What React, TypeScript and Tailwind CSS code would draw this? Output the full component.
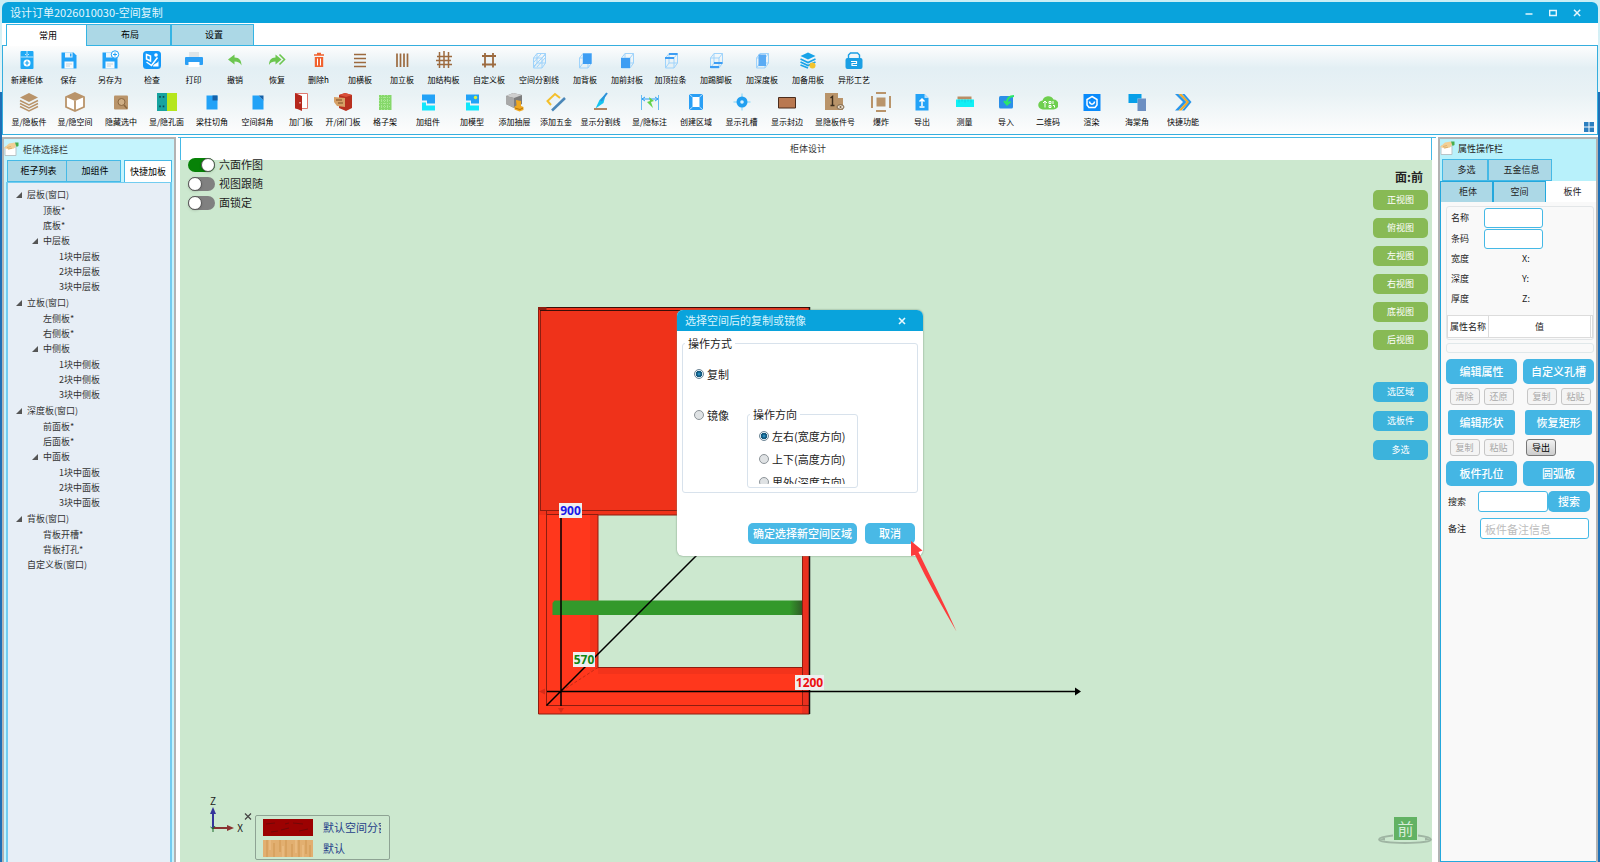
import type { ReactNode } from "react";

type Tool = { label: string; width: string; icon: ReactNode };

const BLUE = "#22a2f7";
const TAN = "#b9946a";
const BROWN = "#9c6a3f";
const WIRE = "#9fd3fb";

function WireBox({ children }: { children?: ReactNode }) {
  return (
    <>
      <path d="M4.500 8h8.500v10h-8.500z M4.500 8l3.500-4.500h8.500v9.500l-3.500 5 M13 8l3.500-4.500 M8 3.500v9.500h8.500 M8 13l-3.500 5" fill="none" stroke={WIRE} strokeWidth="1" />
      {children}
    </>
  );
}

function Floppy() {
  return (
    <>
      <path d="M2.500 2.500h12l3 3v13h-15z" fill={BLUE} />
      <path d="M6 2.500h7.500v5H6z" fill="#eaf5fb" />
      <path d="M11 3.500h1.500v3H11z" fill={BLUE} />
      <path d="M5.500 11.500h9v7h-9z" fill="#f8fbfd" />
      <path d="M7 14h6M7 16h4" stroke="#c4d3dc" />
    </>
  );
}

const firstRow: Tool[] = [
  {
    label: "新建柜体", width: "w-[42px]",
    icon: (
      <>
        <rect x="3.500" y="1" width="13" height="18" rx="1" fill="#1fa9f5" />
        <path d="M3.500 7h13M10 1v6M8 4.500h1M11 4.500h1" stroke="#bfe6fc" />
        <circle cx="10" cy="13" r="3.500" fill="#fff" />
        <path d="M10 10.800v4.400M7.800 13h4.400" stroke="#1fa9f5" strokeWidth="1.200" />
      </>
    ),
  },
  { label: "保存", width: "w-[41px]", icon: <Floppy /> },
  {
    label: "另存为", width: "w-[42px]",
    icon: (
      <>
        <Floppy />
        <circle cx="15" cy="4.500" r="3.700" fill="#fff" stroke={BLUE} />
        <path d="M15 2.500v4M13 4.500h4" stroke={BLUE} />
      </>
    ),
  },
  {
    label: "检查", width: "w-[42px]",
    icon: (
      <>
        <rect x="1" y="1" width="18" height="18" rx="3.500" fill="#1499fa" />
        <path d="M4.500 4.500l4 1.500v5l-4-2zM4.500 12l5 3.500l6-8" fill="none" stroke="#fff" strokeWidth="1.500" />
        <circle cx="14" cy="5" r="1.800" fill="#fff" />
        <path d="M11 16.500c0-3 5.500-3 5.500-6v6z" fill="#fff" />
      </>
    ),
  },
  {
    label: "打印", width: "w-[41px]",
    icon: (
      <>
        <path d="M5 2h10v6H5z" fill="#dfe5e8" />
        <rect x="1" y="7" width="18" height="8" rx="1" fill="#2b9ff5" />
        <path d="M4.500 12h11v5h-11z" fill="#fff" />
      </>
    ),
  },
  { label: "撤销", width: "w-[42px]", icon: <path d="M3 9.500l6.500-5v3c5 0 7 3 7 8c-1.500-3-3.500-4-7-4v3z" fill="#6cc650" /> },
  {
    label: "恢复", width: "w-[42px]",
    icon: (
      <>
        <path d="M14.500 9.500L8.500 4.500v3C4 7.500 2 10.500 2 15c1.500-3 3.500-3.500 6.500-3.500v3z" fill="#6cc650" />
        <path d="M12.500 4.500l5 5l-5 5" fill="none" stroke="#6cc650" strokeWidth="1.600" />
      </>
    ),
  },
  {
    label: "删除h", width: "w-[41px]",
    icon: (
      <>
        <path d="M5 5h10M8 3.500h4" stroke="#f1622f" strokeWidth="1.600" />
        <path d="M5.800 7h8.400v10H5.800z" fill="#f1622f" />
        <path d="M8.500 8.500v7M11.500 8.500v7" stroke="#fff" />
      </>
    ),
  },
  { label: "加横板", width: "w-[42px]", icon: <path d="M4 4.500h12M4 8.500h12M4 12.500h12M4 16.500h12" stroke={BROWN} strokeWidth="1.700" /> },
  { label: "加立板", width: "w-[42px]", icon: <path d="M5 3.500v13.500M8.500 3.500v13.500M12 3.500v13.500M15.500 3.500v13.500" stroke={BROWN} strokeWidth="1.700" /> },
  { label: "加结构板", width: "w-[41px]", icon: <path d="M3 6.500h15M2 10.500h15M3 14.500h15M5.500 2v16M10 1v17M14.500 2v16" stroke={BROWN} strokeWidth="1.500" /> },
  { label: "自定义板", width: "w-[50px]", icon: <path d="M3 6h14M3 14.500h14M6 3v14.500M14 3v14.500" stroke={BROWN} strokeWidth="1.800" /> },
  {
    label: "空间分割线", width: "w-[50px]",
    icon: <WireBox><path d="M5 12l7-8M5 16l11-11M8 17l8-9" stroke={WIRE} /></WireBox>,
  },
  { label: "加背板", width: "w-[42px]", icon: <WireBox><path d="M8 3.500h8.500v10.500H8z" fill="#3d9df3" /></WireBox> },
  { label: "加前封板", width: "w-[42px]", icon: <WireBox><path d="M4 8h9v10H4z" fill="#3d9df3" /></WireBox> },
  { label: "加顶拉条", width: "w-[45px]", icon: <WireBox><path d="M4 8h9M8 4h8.500" stroke="#3d9df3" strokeWidth="1.800" /></WireBox> },
  { label: "加踢脚板", width: "w-[46px]", icon: <WireBox><path d="M4 17h9M8 13h8.500" stroke="#3d9df3" strokeWidth="1.800" /></WireBox> },
  { label: "加深度板", width: "w-[46px]", icon: <WireBox><path d="M6.500 4.500h7.500V16H6.500z" fill="#5aabf4" /></WireBox> },
  {
    label: "加备用板", width: "w-[46px]",
    icon: (
      <>
        <path d="M10 2.500l7.500 3.500L10 9.500L2.500 6z" fill="#18a3e8" />
        <path d="M2.500 9l7.500 3.500L17.500 9M2.500 12l7.500 3.500l7.500-3.500M2.500 15l7.500 3" fill="none" stroke="#18a3e8" strokeWidth="1.600" />
        <circle cx="14.500" cy="15.500" r="3" fill="#f2c32c" />
      </>
    ),
  },
  {
    label: "异形工艺", width: "w-[46px]",
    icon: (
      <>
        <path d="M4.500 8.500v-3.500l2-2h7l2 2v3.500" fill="none" stroke="#1b9fe4" strokeWidth="1.400" />
        <rect x="1.500" y="8" width="17" height="11" rx="2" fill="#1b9fe4" />
        <path d="M7 11.500h5.500v2H8v2h5" fill="none" stroke="#fff" strokeWidth="1.200" />
      </>
    ),
  },
];

const secondRow: Tool[] = [
  {
    label: "显/隐板件", width: "w-[46px]",
    icon: (
      <>
        <path d="M10 1l9 4.500L10 10L1 5.500z" fill={TAN} />
        <path d="M1 8.500l9 4.500l9-4.500M1 11.500l9 4.500l9-4.500M1 14.500l9 4.500l9-4.500" fill="none" stroke={TAN} strokeWidth="1.500" />
      </>
    ),
  },
  {
    label: "显/隐空间", width: "w-[46px]",
    icon: (
      <>
        <path d="M10 1l9 4v10l-9 4l-9-4V5z" fill="#fff" stroke={TAN} strokeWidth="1.800" />
        <path d="M1 5l9-4l9 4l-9 4z" fill={TAN} />
        <path d="M10 9v10" stroke={TAN} strokeWidth="1.800" />
      </>
    ),
  },
  {
    label: "隐藏选中", width: "w-[46px]",
    icon: (
      <>
        <rect x="3" y="3.500" width="14" height="14" rx="1" fill={TAN} />
        <circle cx="10.500" cy="10" r="3.500" fill="#cfae85" stroke="#8a6740" />
        <path d="M13 13l3 3.500" stroke="#8a6740" strokeWidth="1.500" />
      </>
    ),
  },
  {
    label: "显/隐孔面", width: "w-[45px]",
    icon: (
      <>
        <path d="M0 1h10v18H0z" fill="#17a3a0" />
        <path d="M10 1h10v18H10z" fill="#b5e61d" />
        <path d="M3 4v1.800M3 13.500v1.800M6.500 4v1.800M6.500 13.500v1.800" stroke="#0b4a55" strokeWidth="1.600" />
      </>
    ),
  },
  {
    label: "梁柱切角", width: "w-[46px]",
    icon: (
      <>
        <path d="M4.500 3.500h11v14h-11z" fill={BLUE} />
        <path d="M10.500 3.500h5v5h-5z" fill="#1461a8" />
      </>
    ),
  },
  {
    label: "空间斜角", width: "w-[45px]",
    icon: (
      <>
        <path d="M4.500 3.500h6l5 5v9h-11z" fill={BLUE} />
        <path d="M10.500 3.500h5v5z" fill="#1461a8" />
      </>
    ),
  },
  {
    label: "加门板", width: "w-[42px]",
    icon: (
      <>
        <path d="M4.500 1.500h12v15h-12z" fill="#fff" stroke="#e07a70" />
        <path d="M4 1l7 3v15l-7-3z" fill="#b5271c" />
        <path d="M9 10v1.500" stroke="#fff" />
      </>
    ),
  },
  {
    label: "开/闭门板", width: "w-[42px]",
    icon: (
      <>
        <path d="M6 3l6-2l7 2v13l-6 3l-7-3z" fill="#b8301f" />
        <path d="M6 3l6-2l7 2l-6 2z" fill="#d9503a" />
        <path d="M1 5l11 1v9l-8-1l-3-4z" fill="#d6a066" />
        <path d="M3 8h6M5 11h5" stroke="#7c4a22" />
      </>
    ),
  },
  {
    label: "格子架", width: "w-[42px]",
    icon: (
      <>
        <path d="M4 3h12.500v15H4z" fill="#86d86b" />
        <path d="M4 5.500h12M4 8.500h12M4 11.500h12M4 14.500h12M6.500 3v15M9.500 3v15M12.500 3v15" stroke="#a9e894" strokeDasharray="1 1" />
      </>
    ),
  },
  {
    label: "加组件", width: "w-[44px]",
    icon: (
      <>
        <path d="M4 2.500h13v9H9v-3H4z" fill={BLUE} />
        <path d="M4 10.500h4v3h9v5H4z" fill="#12e6fb" />
      </>
    ),
  },
  {
    label: "加模型", width: "w-[44px]",
    icon: (
      <>
        <path d="M4 2.500h13v9H9v-3H4z" fill={BLUE} />
        <path d="M4 10.500h4v3h9v5H4z" fill="#12e6fb" />
        <circle cx="13.500" cy="5.500" r="1.700" fill="#e3f23a" />
      </>
    ),
  },
  {
    label: "添加抽屉", width: "w-[41px]",
    icon: (
      <>
        <path d="M1 4l7-3l9 2v9l-8 4l-8-4z" fill="#7d7d7d" />
        <path d="M1 4l7-3l9 2l-8 3z" fill="#cfcfcf" />
        <path d="M1 4l8 2v10l-8-4z" fill="#a9a9a9" />
        <path d="M11 8l5 1v5l2.500 1v3l-4 1.500l-5-2v-3l2-1z" fill="#efa81f" />
        <path d="M10 16l5 1.500l3-1.500" fill="none" stroke="#b87308" />
      </>
    ),
  },
  {
    label: "添加五金", width: "w-[42px]",
    icon: (
      <>
        <path d="M5 13l-3.500-4l7.500-7l5 4" fill="none" stroke="#f4bf2b" strokeWidth="2" />
        <path d="M6 18.500L19 6" stroke="#4b87b8" strokeWidth="2.600" />
      </>
    ),
  },
  {
    label: "显示分割线", width: "w-[47px]",
    icon: (
      <>
        <path d="M15 1.500L8.500 8l-4 8.500l8-5.500z" fill="#14c4f0" />
        <path d="M16 1l-6 8" stroke="#2f8fd8" strokeWidth="2" />
        <path d="M3 17h13" stroke="#b08462" strokeWidth="2" />
      </>
    ),
  },
  {
    label: "显/隐标注", width: "w-[51px]",
    icon: (
      <>
        <path d="M1.500 3v15M18.500 3v15" stroke="#69bdf2" />
        <path d="M2 7h16M5 5L2 7l3 2M15 5l3 2l-3 2" fill="none" stroke="#2b9ff5" />
        <path d="M9 5l5 4l-3 1l2 6l-6-6l3-1z" fill="#63d34a" />
      </>
    ),
  },
  {
    label: "创建区域", width: "w-[42px]",
    icon: (
      <>
        <path d="M3 2h14v16H3z" fill="#299ff5" />
        <path d="M6.500 5h7v10h-7z" fill="#fff" />
        <path d="M3 2l3.500 3M17 2l-3.500 3M3 18l3.500-3M17 18l-3.500-3" stroke="#bfe1fb" />
      </>
    ),
  },
  {
    label: "显示孔槽", width: "w-[49px]",
    icon: (
      <>
        <path d="M10 1.500v17M1.500 10h17" stroke="#7ad3fa" />
        <circle cx="10" cy="10" r="5.500" fill="#219ff0" />
        <circle cx="10" cy="10" r="1.800" fill="#d8effd" />
      </>
    ),
  },
  { label: "显示封边", width: "w-[42px]", icon: <path d="M1.500 5.500h17v10.500h-17z" fill="#b97850" stroke="#4a2c1c" /> },
  {
    label: "显隐板件号", width: "w-[54px]",
    icon: (
      <>
        <path d="M0 1h13v5h5v12H0z" fill={TAN} />
        <path d="M5.500 6l2-1.500v9M5.500 13.500h4" fill="none" stroke="#3b2c1c" strokeWidth="1.400" />
        <ellipse cx="15.500" cy="15" rx="3.500" ry="2.300" fill="#e9ddcd" stroke="#7c6448" />
        <circle cx="15.500" cy="15" r="1" fill="#7c6448" />
      </>
    ),
  },
  {
    label: "爆炸", width: "w-[38px]",
    icon: (
      <>
        <path d="M5.500 5.500h9v9h-9z" fill={TAN} />
        <path d="M5 1h10M5 19h10M1 4v12M19 4v12" stroke={TAN} strokeWidth="2" />
      </>
    ),
  },
  {
    label: "导出", width: "w-[44px]",
    icon: (
      <>
        <path d="M3.500 2h9l4 4v12.500h-13z" fill={BLUE} />
        <path d="M12.500 2l4 4h-4z" fill="#b6dffc" />
        <path d="M10 14V7.500M7.500 9.500L10 7l2.500 2.500M7.500 15h5" fill="none" stroke="#fff" strokeWidth="1.500" />
      </>
    ),
  },
  {
    label: "测量", width: "w-[41px]",
    icon: (
      <>
        <path d="M2.500 4.500h14v3h-14z" fill="#b98e66" />
        <path d="M1 7.500h18v7.500H1z" fill="#0ff0f5" />
        <path d="M4 7.500v3M7 7.500v2M10 7.500v3M13 7.500v2M16 7.500v3" stroke="#12d0de" />
      </>
    ),
  },
  {
    label: "导入", width: "w-[42px]",
    icon: (
      <>
        <rect x="3" y="4" width="14" height="12.500" rx="1.500" fill="#2b8fe8" />
        <path d="M18 4c-5 0-7 2-7 7M8 9l3 3.500l3.500-3" fill="none" stroke="#2ce66a" strokeWidth="2" />
      </>
    ),
  },
  {
    label: "二维码", width: "w-[42px]",
    icon: (
      <>
        <path d="M5 17.500a4.500 4.500 0 0 1-.5-9a6 6 0 0 1 11-1a5 5 0 0 1 0 10z" fill="#6fcf4f" />
        <path d="M7 15.500V9M5 11l2-2l2 2M11 9.500h2v2h-2zM15 9v3M11 13.500h2v2h-2zM15 13.500h1.500v2" fill="none" stroke="#fff" />
      </>
    ),
  },
  {
    label: "渲染", width: "w-[45px]",
    icon: (
      <>
        <path d="M1.500 2h17v17h-17z" fill="#0a8bfb" />
        <path d="M10 4.500l5 3v5.500l-2 2.500H7L5 13V7.500z" fill="none" stroke="#fff" strokeWidth="1.500" />
        <path d="M7.500 9.500c.5 3.500 4.500 3.500 5 0" fill="none" stroke="#fff" strokeWidth="1.500" />
      </>
    ),
  },
  {
    label: "海棠角", width: "w-[46px]",
    icon: (
      <>
        <path d="M10.500 6.500h8.500v12.500h-8.500z" fill="#6c8fc2" />
        <path d="M1.500 2h13v4.500h-4V11h-9z" fill="#079fe8" />
      </>
    ),
  },
  {
    label: "快捷功能", width: "w-[46px]",
    icon: (
      <>
        <path d="M2 2l8 8l-8 8.500h3.500l8-8.500l-8-8z" fill="#2a96ea" />
        <path d="M5.500 2l8 8l-8 8.500h3l8-8.500l-8-8z" fill="#f0a829" />
        <path d="M9 2l7 8l-7 8.500h2.500l7-8.500l-7-8z" fill="#2a96ea" />
      </>
    ),
  },
];

function ToolRow({ tools }: { tools: Tool[] }) {
  return (
    <div className="flex h-[42px]">
      {tools.map((tool) => (
        <button key={tool.label} type="button" className={`flex shrink-0 flex-col items-center gap-1 ${tool.width}`}>
          <svg viewBox="0 0 20 20" className="size-5 shrink-0" aria-hidden="true">{tool.icon}</svg>
          <span className="text-[8px] leading-3 whitespace-nowrap">{tool.label}</span>
        </button>
      ))}
    </div>
  );
}

type Node = { label: string; children?: Node[] };

const group = (name: string, sides: string[], middle: string): Node => ({
  label: `${name}(窗口)`,
  children: [
    ...sides.map((label) => ({ label })),
    { label: middle, children: ["1块", "2块", "3块"].map((count) => ({ label: count + middle })) },
  ],
});

const tree: Node[] = [
  group("层板", ["顶板*", "底板*"], "中层板"),
  group("立板", ["左侧板*", "右侧板*"], "中侧板"),
  group("深度板", ["前面板*", "后面板*"], "中面板"),
  { label: "背板(窗口)", children: [{ label: "背板开槽*" }, { label: "背板打孔*" }] },
  { label: "自定义板(窗口)" },
];

function TreeItems({ nodes }: { nodes: Node[] }) {
  return nodes.map((node) => (
    <li key={node.label}>
      <div className="flex h-[15px] items-center">
        <span className="flex w-4 justify-center">
          {node.children && (
            <svg viewBox="0 0 6 6" className="size-[6px]" aria-hidden="true">
              <path d="M6 0v6H0z" fill="#555" />
            </svg>
          )}
        </span>
        <span className="leading-[15px] whitespace-nowrap">{node.label}</span>
      </div>
      {node.children && (
        <ul className={node.label.includes("窗口") ? "pt-px pl-4" : "py-px pl-4"}>
          <TreeItems nodes={node.children} />
        </ul>
      )}
    </li>
  ));
}

function HandIcon() {
  return (
    <svg viewBox="0 0 16 16" className="size-4" aria-hidden="true">
      <path d="M1 5h11v8.500H1z" fill="#fff" stroke="#b9c4c8" />
      <path d="M0 6l5-4.500l6-1l2 2l-3 4l-5 1z" fill="#f2cf95" />
      <path d="M3 5.500l4-1M4 7l4-.8" stroke="#d9aa66" strokeWidth=".8" />
      <path d="M11 .5h3.500v3.500l-2 1z" fill="#46ae4d" />
    </svg>
  );
}

const sideTab = "h-[22px] border border-[#45b9e6] bg-[#acd8e6]";

function LeftPanel() {
  return (
    <aside className="flex w-[174px] shrink-0 flex-col border-2 border-b-0 border-[#b3b3b3] bg-[#c5f4fd] text-[9px]">
      <h2 className="flex h-[21px] items-center gap-[3px] text-[#333]">
        <HandIcon />柜体选择栏
      </h2>
      <div className="relative z-10 ml-[3px] flex items-end">
        <button type="button" className={`w-[60px] pl-[3px] ${sideTab}`}>柜子列表</button>
        <button type="button" className={`w-[54px] border-l-0 pl-[3px] ${sideTab}`}>加组件</button>
        <button type="button" className="ml-[3px] h-[22px] w-[48px] border border-b-0 border-[#45b9e6] bg-white">快捷加板</button>
      </div>
      <ul className="mx-[2px] flex-1 border-x-2 border-t border-[#72ccf0] bg-[#e7eef6] pt-[4px] pl-[3px] text-[#333]">
        <TreeItems nodes={tree} />
      </ul>
    </aside>
  );
}

function Toggle({ label, on }: { label: string; on?: boolean }) {
  return (
    <label className="flex h-[19px] items-center gap-1 text-[11px] leading-[19px] text-[#222]">
      <input type="checkbox" role="switch" defaultChecked={on} className="peer sr-only" />
      <span className="flex h-[14px] w-[27px] items-center rounded-full bg-[#808080] peer-checked:justify-end peer-checked:bg-[#078207]">
        <span className="size-[14px] rounded-full border border-[#555] bg-white shadow-sm" />
      </span>
      {label}
    </label>
  );
}

const measure = "fill-current font-['Open_Sans','Noto_Sans',sans-serif] text-[12px] font-bold";

function Cabinet() {
  return (
    <svg width="560" height="420" className="absolute top-[140px] left-[350px]" viewBox="530 300 560 420" aria-hidden="true">
      <defs>
        <linearGradient id="shelf" x1="0" x2="1">
          <stop offset="0.950" stopColor="#33992b" />
          <stop offset="1" stopColor="#2f5d27" />
        </linearGradient>
      </defs>
      <path d="M538 307h272v407h-272z" fill="#ff371c" />
      <path d="M590 515h8v152.500l-8 4z" fill="#f5331b" />
      <path d="M538 307h272v208h-272z" fill="#ef321a" />
      <path d="M598 515h204v152.500h-204z" fill="#cce8cf" />
      <path d="M802 515h8v199h-8z" fill="#e9301f" />
      <path d="M598 668h204v6h-204z" fill="#f3331b" />
      <path d="M538.500 307.500v406.500h271M540.500 310v201M546.500 511v195M546.500 514.500h51.500v153h204M540 510.500h262M598 515h204M546.500 705.500h263M802.500 515v191" fill="none" stroke="#8d1d10" />
      <path d="M538 307.500h272M540 310.500h262" stroke="#3a0e08" />
      <path d="M809.500 307v407" stroke="#111" strokeWidth="1.500" />
      <path d="M538 307h8.500v3H538z" fill="#8d1d10" />
      <path d="M552.500 603l2-2.500H802v14.500h-249.500z" fill="url(#shelf)" />
      <path d="M598 667.500l-37 24" stroke="#c42a16" strokeDasharray="3 2" />
      <path d="M561 512v194M547 691.500h528M546.500 705.500L697 555" stroke="#000" strokeWidth="1.500" />
      <path d="M1075 687.500l6 4l-6 4z" fill="#000" />
      <path d="M539 691.500l6-3v6zM561 713l-3-5h6z" fill="#d82c18" />
      <path d="M559 503h23v15h-23zM573 652h22v15h-22zM795 675h29v15h-29z" fill="#efefef" />
      <text x="570.500" y="515" textAnchor="middle" className={`text-[#1818e8] ${measure}`}>900</text>
      <text x="584" y="664" textAnchor="middle" className={`text-[#128612] ${measure}`}>570</text>
      <text x="809.500" y="687" textAnchor="middle" className={`text-[#ec1010] ${measure}`}>1200</text>
    </svg>
  );
}

function Axes() {
  return (
    <svg width="60" height="50" viewBox="200 790 60 50" aria-hidden="true">
      <path d="M213 828v-16" stroke="#34349a" strokeWidth="2" />
      <path d="M210 814l3-7l3 7z" fill="#34349a" />
      <path d="M213 828h16" stroke="#8a3232" strokeWidth="2" />
      <path d="M227 825l7 3l-7 3z" fill="#8a3232" />
      <path d="M210.500 827l2.500 2l2-3M213 828v4" fill="none" stroke="#1d6b2a" />
      <text x="213" y="805" textAnchor="middle" className="fill-[#222] text-[10px]">Z</text>
      <text x="240" y="832" textAnchor="middle" className="fill-[#222] text-[10px]">X</text>
      <path d="M245 813.500l6 6M251 813.500l-6 6" stroke="#444" strokeWidth="1.200" />
    </svg>
  );
}

function Legend() {
  return (
    <div className="flex h-[45px] w-[135px] flex-col justify-center gap-1 rounded-xs border border-[#8ea394] pl-[7px] text-[11px] text-[#27418a]">
      <div className="flex items-center gap-[10px]">
        <svg width="50" height="17" aria-hidden="true">
          <path d="M0 0h50v17H0z" fill="#9c0202" />
          <path d="M3 5l9-1M18 11l8-2M30 4l10 1M8 13l7-1M36 12l9-2M22 5l4-1" stroke="#720808" />
        </svg>
        <span className="w-[58px] overflow-hidden leading-[17px] whitespace-nowrap">默认空间分割</span>
      </div>
      <div className="flex items-center gap-[10px]">
        <svg width="50" height="17" aria-hidden="true">
          <path d="M0 0h50v17H0z" fill="#e2af70" />
          <path d="M4 0v17M11 3v14M17 0v12M23 0v17M29 4v13M36 0v17M43 0v14M47 5v12" stroke="#cf9650" />
          <path d="M7 0v10M20 6v11M33 0v13M40 5v12" stroke="#efc48c" />
        </svg>
        <span className="leading-[17px]">默认</span>
      </div>
    </div>
  );
}

function Choice({ name, label, checked }: { name: string; label: string; checked?: boolean }) {
  return (
    <label className="flex items-center gap-[3px] leading-4 whitespace-nowrap">
      <input
        type="radio"
        name={name}
        defaultChecked={checked}
        className="size-[10px] shrink-0 appearance-none rounded-full border border-[#8d9499] bg-[#dfe2e4] checked:border-[#6f8797] checked:bg-[radial-gradient(circle,#35a6dd_0,#12597f_2px,#12597f_3px,#e4eef4_3px)]"
      />
      {label}
    </label>
  );
}

const dialogButton = "h-[21px] rounded-[5px] bg-[#49b9e6] text-[11px] font-medium text-white";

function CopyDialog() {
  return (
    <section role="dialog" aria-label="选择空间后的复制或镜像" className="absolute top-[150px] left-[497px] w-[246px] rounded-md bg-white pb-3 text-[11px] text-[#222] shadow-[0_0_2px_#6f8a74]">
      <header className="flex h-[21px] items-center justify-between rounded-t-md bg-[#09a3dc] pr-[17px] pl-2 text-[#d8f3fd]">
        <h2>选择空间后的复制或镜像</h2>
        <button type="button" aria-label="关闭">
          <svg viewBox="0 0 8 8" className="size-2"><path d="M1 1l6 6M7 1L1 7" stroke="#e8f8fe" strokeWidth="1.600" /></svg>
        </button>
      </header>
      <fieldset className="mx-[5px] mt-1 h-[158px] rounded-[3px] border border-[#d8e2ec] px-[11px]">
        <legend className="-ml-[9px] px-[3px] leading-4">操作方式</legend>
        <div className="mt-[15px]"><Choice name="mode" label="复制" checked /></div>
        <div className="mt-5 flex gap-[18px]">
          <div className="pt-[5px]"><Choice name="mode" label="镜像" /></div>
          <fieldset className="mt-1 h-[82px] w-[111px] rounded-[3px] border border-[#d8e2ec] pl-[11px]">
            <legend className="-ml-[9px] px-[3px] leading-[17px]">操作方向</legend>
            <div className="mt-[5px] flex h-[56px] flex-col gap-[7px] overflow-hidden">
              <Choice name="direction" label="左右(宽度方向)" checked />
              <Choice name="direction" label="上下(高度方向)" />
              <Choice name="direction" label="里外(深度方向)" />
            </div>
          </fieldset>
        </div>
      </fieldset>
      <div className="mt-[30px] flex justify-end gap-2 pr-2">
        <button type="button" className={`w-[109px] ${dialogButton}`}>确定选择新空间区域</button>
        <button type="button" className={`w-[50px] ${dialogButton}`}>取消</button>
      </div>
    </section>
  );
}

const viewButton = "h-5 w-[55px] rounded-[5px] text-[9px] text-white";

function Workspace() {
  return (
    <main className="flex min-w-0 flex-1 flex-col border-t border-[#45b9e6] bg-white pr-[4px] pl-[2px]">
      <h1 className="flex h-[22px] items-center justify-center border-x border-[#45b9e6] pl-1 text-[9px] text-[#333]">柜体设计</h1>
      <div className="relative min-h-[700px] flex-1 bg-[#cce8cf]">
        <Cabinet />
        <div className="absolute top-0 left-2 -mt-[5px]">
          <Toggle label="六面作图" on />
          <Toggle label="视图跟随" />
          <Toggle label="面锁定" />
        </div>
        <div className="absolute top-2 right-1 flex flex-col items-end gap-2">
          <p className="mr-[5px] h-[14px] text-[12px] leading-[18px] font-bold text-[#222]">面:前</p>
          {["正视图", "俯视图", "左视图", "右视图", "底视图", "后视图"].map((name) => (
            <button key={name} type="button" className={`bg-[#88ba55] ${viewButton}`}>{name}</button>
          ))}
          <div className="mt-6 flex flex-col gap-[9px]">
            {["选区域", "选板件", "多选"].map((name) => (
              <button key={name} type="button" className={`bg-[#3cb3dc] ${viewButton}`}>{name}</button>
            ))}
          </div>
        </div>
        <div className="absolute bottom-[22px] left-5"><Axes /></div>
        <div className="absolute bottom-[2px] left-[75px]"><Legend /></div>
        <svg width="54" height="32" viewBox="0 0 54 32" className="absolute right-0 bottom-[14px]" aria-hidden="true">
          <path d="M15 19.500C6 20.500 1 22 1 23.500C1 25.500 12 27 27 27s26-1.500 26-3.500c0-1.500-5-3-13-4" fill="none" stroke="#9fb5a3" strokeWidth="1.800" />
          <path d="M1 23.500l6-2v3zM53 23.500l-6-2v3z" fill="#9fb5a3" />
          <path d="M16 1h23v23H16z" fill="#62b264" />
          <text x="27.500" y="18.500" textAnchor="middle" className="fill-[#d5ecd7] text-[16px]">前</text>
        </svg>
        <CopyDialog />
        <svg width="60" height="100" viewBox="905 535 60 100" className="pointer-events-none absolute top-[375px] left-[725px]" aria-hidden="true">
          <path d="M911 541l11.500 9.500l-4 1.500c12 25 26 52 38 79.500c-15-26-29-50-41.500-76.500l-4 1z" fill="#fc3b3b" />
        </svg>
      </div>
    </main>
  );
}

const field = "rounded-[3px] border border-[#45b9e6] bg-white px-1";
const bigButton = "h-[25px] bg-[#44b6e4] text-[11px] font-medium text-white";
const smallButton = "h-[17px] w-[30px] rounded-[3px] border text-[9px]";
const idle = "border-[#c6c6c6] bg-[#f4f4f4] text-[#a9a9a9]";

function SmallPair({ first, second }: { first: string; second: string }) {
  return (
    <div className="mb-px flex gap-1">
      <button type="button" disabled className={`${smallButton} ${idle}`}>{first}</button>
      <button type="button" disabled className={`${smallButton} ${idle}`}>{second}</button>
    </div>
  );
}

function RightPanel() {
  return (
    <aside className="flex w-[160px] shrink-0 flex-col border-2 border-b-0 border-[#b3b3b3] bg-[#b8f1fb] text-[9px] text-[#222]">
      <h2 className="flex h-[20px] items-center gap-[2px]"><HandIcon />属性操作栏</h2>
      <div className="ml-[2px] flex">
        <button type="button" className={`w-[46px] pl-[3px] ${sideTab}`}>多选</button>
        <button type="button" className={`w-[64px] pl-[3px] ${sideTab}`}>五金信息</button>
      </div>
      <div className="flex h-[21px]">
        <button type="button" className="w-[53px] border border-b-0 border-[#24a8dd] bg-[#acd8e6] pl-[3px]">柜体</button>
        <button type="button" className="w-[53px] border border-b-0 border-[#24a8dd] bg-[#acd8e6]">空间</button>
        <button type="button" className="flex-1 bg-white pl-[3px]">板件</button>
      </div>
      <div className="flex flex-1 flex-col border-b border-l border-[#24a8dd] bg-[#f9f9f9] pt-1 pr-[2px] pl-[5px]">
        <section className="rounded-[3px] border border-[#e3e6e8]">
          {[["名称", "name"], ["条码", "code"]].map(([label, id]) => (
            <div key={id} className="flex h-[21px] items-center pl-1">
              <label htmlFor={id} className="w-[33px]">{label}</label>
              <input id={id} className={`h-5 w-[59px] ${field}`} />
            </div>
          ))}
          {[["宽度", "X:"], ["深度", "Y:"], ["厚度", "Z:"]].map(([label, axis]) => (
            <div key={label} className="flex h-5 items-center pl-1">
              <span className="w-[71px]">{label}</span>
              <span>{axis}</span>
            </div>
          ))}
          <table className="mt-[6px] mb-px h-[23px] w-full border border-[#dcdcdc] bg-white">
            <thead>
              <tr>
                <th scope="col" className="w-[41px] border-r border-[#dcdcdc] font-normal whitespace-nowrap">属性名称</th>
                <th scope="col" className="font-normal">值</th>
                <th aria-hidden="true" className="w-[2px] border-l border-[#dcdcdc]" />
              </tr>
            </thead>
          </table>
        </section>
        <div className="mt-[3px] h-[10px] rounded-[3px] border border-[#e0e8ea]" />
        <div className="mt-[6px] grid grid-cols-2 items-center justify-items-center gap-x-[6px] gap-y-1">
          <button type="button" className={`w-full rounded-[5px] ${bigButton}`}>编辑属性</button>
          <button type="button" className={`w-full rounded-[5px] ${bigButton}`}>自定义孔槽</button>
          <SmallPair first="清除" second="还原" />
          <SmallPair first="复制" second="粘贴" />
          <button type="button" className={`w-[67px] rounded-[3px] ${bigButton}`}>编辑形状</button>
          <button type="button" className={`w-[67px] rounded-[3px] ${bigButton}`}>恢复矩形</button>
          <SmallPair first="复制" second="粘贴" />
          <button type="button" className={`mb-px ml-[3px] justify-self-start border-[#777] bg-linear-to-b from-[#f2f2f2] to-[#cdcdcd] text-black ${smallButton}`}>导出</button>
          <button type="button" className={`w-full rounded-[5px] ${bigButton}`}>板件孔位</button>
          <button type="button" className={`w-full rounded-[5px] ${bigButton}`}>圆弧板</button>
        </div>
        <div className="mt-[5px] flex h-[21px] items-center pl-[2px]">
          <label htmlFor="search" className="w-[30px] shrink-0">搜索</label>
          <input id="search" className={`h-[21px] min-w-0 flex-1 ${field}`} />
          <button type="button" className="mr-[4px] h-[21px] w-[42px] rounded-[5px] bg-[#44b6e4] text-[11px] font-medium text-white">搜索</button>
        </div>
        <div className="mt-[6px] flex h-[21px] items-center pl-[2px]">
          <label htmlFor="note" className="w-[32px] shrink-0">备注</label>
          <input id="note" placeholder="板件备注信息" className={`mr-[5px] h-[21px] min-w-0 flex-1 text-[11px] placeholder:text-[#bcbcbc] ${field}`} />
        </div>
      </div>
    </aside>
  );
}

export default function App() {
  return (
    <div className="flex min-h-screen flex-col bg-[linear-gradient(#c9eef5_0,#e9f3f6_92px,#1f6fb5_92px)] px-[2px] pt-[2px] font-['Noto_Sans_CJK_SC',sans-serif] text-black">
      <div className="flex flex-1 flex-col rounded-t-md bg-white">
        <header className="flex h-[21px] items-center justify-between rounded-t-md bg-[#09a3dc] pr-[17px] pl-2 text-[11px] text-[#e3f6fd]">
          <span>设计订单2026010030-空间复制</span>
          <div className="flex gap-4">
            <button type="button" aria-label="最小化"><svg viewBox="0 0 8 8" className="size-2"><path d="M.5 5h7" stroke="#e3f6fd" strokeWidth="1.500" /></svg></button>
            <button type="button" aria-label="最大化"><svg viewBox="0 0 8 8" className="size-2"><path d="M.7 1.500h6.600v5H.7z" fill="none" stroke="#e3f6fd" strokeWidth="1.400" /></svg></button>
            <button type="button" aria-label="关闭"><svg viewBox="0 0 8 8" className="size-2"><path d="M1 .8l6.200 6.200M7.200.8L1 7" stroke="#e3f6fd" strokeWidth="1.500" /></svg></button>
          </div>
        </header>
        <nav className="relative z-10 mt-px -mb-px flex h-[22px] pl-1 text-[9px]">
          <button type="button" className="w-[81px] border border-b-0 border-[#35b4e4] bg-white pl-[3px]">常用</button>
          <button type="button" className="w-[84px] border border-l-0 border-[#35b4e4] bg-[#acd8e6] pl-[3px]">布局</button>
          <button type="button" className="w-[83px] border border-[#35b4e4] bg-[#acd8e6] pl-[3px]">设置</button>
        </nav>
        <div className="relative flex h-[90px] shrink-0 flex-col border border-[#35aede] bg-[linear-gradient(#fdfdfd,#e3eff4_25%,#e9f2f5_55%,#fdfdfd)] pt-1 pl-[3px]">
          <ToolRow tools={firstRow} />
          <ToolRow tools={secondRow} />
          <svg viewBox="0 0 10 10" className="absolute right-[3px] bottom-[2px] size-[10px]" aria-hidden="true">
            <path d="M0 0h4.500v4.500H0zM5.500 0H10v4.500H5.500zM0 5.500h4.500V10H0zM5.500 5.500H10V10H5.500z" fill="#2b7fc0" />
          </svg>
        </div>
        <div className="flex flex-1 gap-[2px] pt-[2px]">
          <LeftPanel />
          <Workspace />
          <RightPanel />
        </div>
      </div>
    </div>
  );
}
